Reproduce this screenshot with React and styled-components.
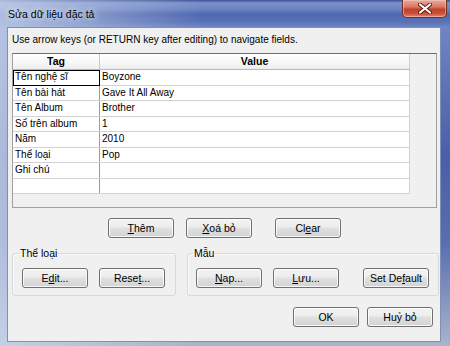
import React from 'react'
import styled, { createGlobalStyle } from 'styled-components'

const GlobalStyle = createGlobalStyle`
  html, body {
    margin: 0;
    padding: 0;
    background: #ffffff;
  }
  body {
    font-family: "Liberation Sans", Arial, sans-serif;
    font-size: 10px;
  }
`

const rows = [
  { tag: 'Tên nghệ sĩ', value: 'Boyzone' },
  { tag: 'Tên bài hát', value: 'Gave It All Away' },
  { tag: 'Tên Album', value: 'Brother' },
  { tag: 'Số trên album', value: '1' },
  { tag: 'Năm', value: '2010' },
  { tag: 'Thể loại', value: 'Pop' },
  { tag: 'Ghi chú', value: '' },
  { tag: '', value: '' },
]

function Label({ text, hot }) {
  // hot = index of the underlined mnemonic letter
  if (hot === undefined) return text
  return (
    <>
      {text.slice(0, hot)}
      <U>{text[hot]}</U>
      {text.slice(hot + 1)}
    </>
  )
}

export default function App() {
  return (
    <>
      <GlobalStyle />
      <Window>
        <TitleBar>
          <Title>Sửa dữ liệu đặc tả</Title>
          <CloseButton>
            <svg width="14" height="11" viewBox="0 0 14 11">
              <path d="M2 1.5 L12 9.5 M12 1.5 L2 9.5" stroke="#5a1a12" strokeWidth="4" strokeLinecap="round" />
              <path d="M2 1.5 L12 9.5 M12 1.5 L2 9.5" stroke="#ffffff" strokeWidth="2.2" strokeLinecap="round" />
            </svg>
          </CloseButton>
        </TitleBar>

        <Client>
          <Hint>Use arrow keys (or RETURN key after editing) to navigate fields.</Hint>

          <Grid>
            <HeaderRow>
              <HeadCell $first>Tag</HeadCell>
              <HeadCell>Value</HeadCell>
            </HeaderRow>
            {rows.map((r, i) => (
              <Row key={i}>
                <Cell $first $selected={i === 0}>{r.tag}</Cell>
                <Cell>{r.value}</Cell>
              </Row>
            ))}
          </Grid>

          <ButtonRow $pad="100px">
            <Button><Label text="Thêm" hot={0} /></Button>
            <Button $ml="12px"><Label text="Xoá bỏ" hot={0} /></Button>
            <Button $ml="23px"><Label text="Clear" hot={2} /></Button>
          </ButtonRow>

          <Groups>
            <Group $w="164px" $pl="9px">
              <Legend>Thể loại</Legend>
              <GroupInner>
                <Button><Label text="Edit..." hot={1} /></Button>
                <Button $ml="11px"><Label text="Reset..." hot={4} /></Button>
              </GroupInner>
            </Group>
            <Group $w="252px" $pl="8px">
              <Legend>Mẫu</Legend>
              <GroupInner>
                <Button><Label text="Nap..." hot={0} /></Button>
                <Button $ml="11px"><Label text="Lưu..." hot={0} /></Button>
                <Button $ml="24px"><Label text="Set Default" hot={6} /></Button>
              </GroupInner>
            </Group>
          </Groups>

          <Footer>
            <Button>OK</Button>
            <Button $ml="8px">Huỷ bỏ</Button>
          </Footer>
        </Client>
      </Window>
    </>
  )
}

const Window = styled.div`
  width: 450px;
  height: 346px;
  box-sizing: border-box;
  padding: 0 9px 4px 7px;
  display: flex;
  flex-direction: column;
  background:
    linear-gradient(to right, rgba(205, 217, 238, 0.75) 0, rgba(205, 217, 238, 0) 45%),
    linear-gradient(to bottom, #3c5197 0, #7b90cb 3px, #6d83c4 9px, #4f68b0 14px, #5a72b7 22px, #6f85c3 27px, #4a5fa7 45%, #5a6daf 70%, #a9b5cb 100%);
  overflow: hidden;
`

const TitleBar = styled.div`
  height: 27px;
  display: flex;
  justify-content: space-between;
  align-items: flex-start;
  margin-right: -6px;
`

const Title = styled.div`
  padding: 7px 0 0 1px;
  line-height: 14px;
  font-size: 10.5px;
  color: #000;
  text-shadow: 0 0 6px rgba(255, 255, 255, 0.9), 0 0 10px rgba(255, 255, 255, 0.7);
`

const CloseButton = styled.div`
  width: 45px;
  height: 18px;
  box-sizing: border-box;
  border: 1px solid #6e2e25;
  border-top: none;
  border-radius: 0 0 5px 5px;
  background: linear-gradient(to bottom, #e9a99a 0, #d97a66 40%, #c3402a 55%, #cc5038 80%, #e08a6c 100%);
  box-shadow: inset 0 0 0 1px rgba(255, 220, 210, 0.45);
  display: flex;
  align-items: center;
  justify-content: center;
`

const Client = styled.div`
  flex: 1;
  background: #f0f0f0;
  border: 1px solid #7f90b8;
  display: flex;
  flex-direction: column;
`

const Hint = styled.div`
  padding: 5px 0 0 4px;
  line-height: 14px;
  font-size: 10px;
  color: #000;
`

const Grid = styled.div`
  margin: 6px 3px 0 4px;
  height: 155px;
  box-sizing: border-box;
  border: 1px solid #a0a0a0;
  border-top-color: #6e6e6e;
  background: #f0f0f0;
  font-size: 10px;
  color: #000;
`

const HeaderRow = styled.div`
  display: grid;
  grid-template-columns: 87px 310px;
  height: 16px;
  box-sizing: border-box;
  background: linear-gradient(to bottom, #ffffff 0, #f7f7f7 60%, #ececec 100%);
  border-bottom: 1px solid #b9b9b9;
  width: 397px;
`

const HeadCell = styled.div`
  font-weight: bold;
  font-size: 10.5px;
  text-align: center;
  line-height: 15px;
  border-right: ${(p) => (p.$first ? '1px solid #c8c8c8' : '1px solid #d0d0d0')};
`

const Row = styled.div`
  display: grid;
  grid-template-columns: 87px 310px;
  width: 397px;
  height: 15.5px;
  box-sizing: border-box;
  background: #ffffff;
  border-bottom: 1px solid #d2d2d2;
`

const Cell = styled.div`
  padding-left: 2px;
  line-height: 14px;
  white-space: nowrap;
  overflow: hidden;
  border-right: 1px solid ${(p) => (p.$first ? '#9a9a9a' : '#d2d2d2')};
  outline: ${(p) => (p.$selected ? '1px solid #000' : 'none')};
  outline-offset: -1px;
  margin-bottom: ${(p) => (p.$selected ? '-1px' : '0')};
`

const ButtonRow = styled.div`
  display: flex;
  margin-top: 10px;
  padding-left: ${(p) => p.$pad};
`

const Button = styled.div`
  width: 66px;
  height: 20px;
  box-sizing: border-box;
  margin-left: ${(p) => p.$ml || '0'};
  border: 1px solid #707070;
  border-radius: 3px;
  background: linear-gradient(to bottom, #f4f4f4 0, #ececec 45%, #e0e0e0 50%, #d3d3d3 100%);
  box-shadow: inset 0 0 0 1px rgba(255, 255, 255, 0.8);
  display: flex;
  align-items: center;
  justify-content: center;
  font-size: 10.5px;
  color: #000;
  white-space: nowrap;
`

const U = styled.span`
  text-decoration: underline;
`

const Groups = styled.div`
  display: flex;
  gap: 11px;
  margin-top: 8px;
  padding-left: 4px;
`

const Group = styled.fieldset`
  margin: 0;
  width: ${(p) => p.$w};
  box-sizing: border-box;
  padding: 1px 0 7px ${(p) => p.$pl};
  border: 1px solid #d5d9de;
  border-radius: 3px;
  box-shadow: inset 1px 1px 0 #fbfbfb;
  min-width: 0;
`

const Legend = styled.legend`
  margin-left: -3px;
  padding: 0 1px;
  line-height: 14px;
  font-size: 10.5px;
  color: #000;
`

const GroupInner = styled.div`
  display: flex;
  margin-top: 7px;
`

const Footer = styled.div`
  display: flex;
  justify-content: flex-end;
  margin-top: 11px;
  padding-right: 7px;
`
